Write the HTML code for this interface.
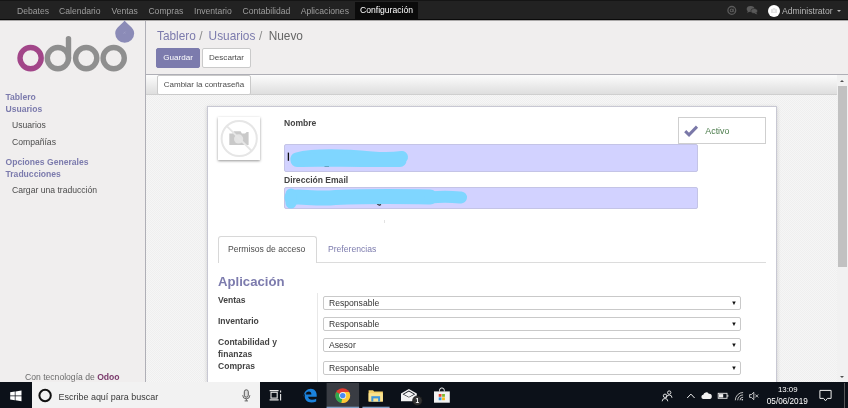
<!DOCTYPE html>
<html lang="es">
<head>
<meta charset="utf-8">
<title>Odoo - Usuarios</title>
<style>
html,body{margin:0;padding:0;}
body{width:848px;height:408px;overflow:hidden;position:relative;will-change:transform;background:#f0eeee;font-family:"Liberation Sans",Arial,sans-serif;font-size:8.1px;color:#4c4c4c;}
.abs{position:absolute;}
a{text-decoration:none;color:inherit;}
/* top nav */
#nav{left:0;top:0;width:848px;height:20px;background:linear-gradient(#151515 0,#151515 1px,#222222 1px,#222222 19px,#0a0a0a 19px,#0a0a0a 20px);}
#navl{left:0;top:20px;width:848px;height:1px;background:#a9a7a7;}
#nav span.mi{position:absolute;top:0.5px;height:21px;line-height:21px;color:#9d9d9d;font-size:8.6px;white-space:nowrap;}
#nav span.act{background:#0b0b0b;color:#ffffff;padding:0 5px;height:17px;line-height:17px;top:2px;}
/* sidebar */
#side{left:0;top:21px;width:145px;height:362px;background:#f0eeee;border-right:1px solid #afafb6;box-sizing:content-box;}
.sh{position:absolute;left:5.5px;color:#7c7bad;font-weight:bold;font-size:8.58px;white-space:nowrap;line-height:10px;}
.si{position:absolute;left:12px;color:#4c4c4c;font-size:8.6px;white-space:nowrap;line-height:10px;}
/* header */
#head{left:146px;top:21px;width:702px;height:53px;background:#f0eeee;border-bottom:1px solid #afafb6;}
.bc{position:absolute;left:157px;top:28.2px;font-size:11.85px;line-height:16px;white-space:nowrap;color:#4c4c4c;}
.bc a,.bc span{position:absolute;top:0;color:#7c7bad;}
.bc span.sl{color:#8a8a8a;}
.btn{position:absolute;box-sizing:border-box;border:1px solid #cacaca;border-radius:2px;background:#ffffff;color:#4c4c4c;font-size:8.1px;text-align:center;white-space:nowrap;}
.btn.hl{background:#7c7bad;border-color:#7c7bad;color:#fff;}
/* status bar */
#status{left:146px;top:75px;width:691px;height:19px;background:linear-gradient(#fcfcfc,#dedede);border-bottom:1px solid #cfcfcf;}
/* form bg */
#formbg{left:146px;top:95px;width:691px;height:288px;background-color:#f6f6f6;background-image:linear-gradient(45deg,#efefef 25%,transparent 25%,transparent 75%,#efefef 75%),linear-gradient(45deg,#efefef 25%,transparent 25%,transparent 75%,#efefef 75%);background-size:2px 2px;background-position:0 0,1px 1px;}
#sheet{left:207px;top:106px;width:568px;height:290px;background:#fff;border:1px solid #c8c8d3;box-shadow:0 1px 4px rgba(0,0,0,0.15);}
.lbl{position:absolute;font-weight:bold;color:#444;font-size:8.55px;line-height:11px;white-space:nowrap;}
.fld{position:absolute;left:284px;width:414px;background:#d2d2ff;border:1px solid #c4c4e6;border-radius:2px;box-sizing:border-box;}
.sel{position:absolute;left:323px;width:418px;height:14px;box-sizing:border-box;border:1px solid #c9c9c9;border-radius:2px;background:#fff;font-size:8.6px;line-height:12px;padding-left:5px;color:#333;}
.sel i{position:absolute;right:3px;top:0;font-style:normal;font-size:6px;color:#111;}
/* scrollbar */
#sb{left:837px;top:75px;width:11px;height:308px;background:#f1f1f1;}
#sbt{left:838px;top:86px;width:9px;height:181px;background:#c1c1c1;}
/* taskbar */
#task{left:0;top:382px;width:848px;height:26px;background:#0c1119;}
#search{left:32px;top:382px;width:228px;height:26px;background:#f2f2f2;}
</style>
</head>
<body>
<!-- NAV -->
<div id="nav" class="abs">
  <span class="mi" style="left:17px">Debates</span>
  <span class="mi" style="left:59px">Calendario</span>
  <span class="mi" style="left:111.500px">Ventas</span>
  <span class="mi" style="left:148.400px">Compras</span>
  <span class="mi" style="left:194px">Inventario</span>
  <span class="mi" style="left:242.600px">Contabilidad</span>
  <span class="mi" style="left:300.700px">Aplicaciones</span>
  <span class="mi act" style="left:355px">Configuración</span>
  <span class="mi" style="left:782px;color:#b5b5b5">Administrator</span>

  <svg class="abs" style="left:726px;top:5px" width="12" height="12" viewBox="0 0 12 12"><circle cx="5.8" cy="5.4" r="3.900" fill="none" stroke="#5a5a5a" stroke-width="1.3"/><circle cx="5.6" cy="5.4" r="1.4" fill="none" stroke="#5a5a5a" stroke-width="1.1"/><path d="M7.4 3.6v2.6c0 .9 1.2 1.2 2 .3" fill="none" stroke="#5a5a5a" stroke-width="0.8"/></svg>
  <svg class="abs" style="left:746px;top:5px" width="13" height="11" viewBox="0 0 13 11"><ellipse cx="4.6" cy="4" rx="3.9" ry="2.9" fill="#5a5a5a"/><path d="M2 5.5L1.2 8l2.6-1.4z" fill="#5a5a5a"/><ellipse cx="8.2" cy="6" rx="3.4" ry="2.5" fill="#5a5a5a" stroke="#222" stroke-width="0.6"/><path d="M10 7.6l1.4 1.8-2.8-.9z" fill="#5a5a5a"/></svg>
  <div class="abs" style="left:768px;top:5px;width:12px;height:12px;border-radius:50%;background:#fff"></div>
  <svg class="abs" style="left:771px;top:8px" width="6" height="5" viewBox="0 0 6 5"><path d="M0 1h1.5l.5-1h2l.5 1H6v4H0z" fill="#e3e3e3"/><circle cx="3" cy="2.9" r="1.2" fill="#f4f4f4"/></svg>
  <div class="abs" style="left:837px;top:10px;width:0;height:0;border-left:2.3px solid transparent;border-right:2.3px solid transparent;border-top:2.4px solid #b5b5b5"></div>
</div>

<div id="navl" class="abs"></div>
<!-- SIDEBAR -->
<div id="side" class="abs"></div>

<svg class="abs" style="left:0;top:19px" width="146" height="62" viewBox="0 19 146 62">
  <path d="M124.6 20.300 C126.5 24.2 134.2 27.5 134.2 33.2 A9.5 9.5 0 0 1 115.2 33.2 C115.2 27.5 122.7 24.2 124.6 20.300Z" fill="#8b8bb7"/>
  <path d="M123.4 33.800l2.200-2.200M123.700 31.900l.5.5M125 33.200l.5.500" stroke="#a9a9cc" stroke-width="0.500" fill="none"/>
  <circle cx="30.6" cy="58.1" r="10.6" fill="none" stroke="#a24689" stroke-width="5.4"/>
  <circle cx="57.9" cy="58.1" r="10.6" fill="none" stroke="#8f8f8f" stroke-width="5.4"/>
  <path d="M68.5 38.6V58.1" fill="none" stroke="#8f8f8f" stroke-width="5.4" stroke-linecap="round"/>
  <circle cx="86.2" cy="58.1" r="10.6" fill="none" stroke="#8f8f8f" stroke-width="5.4"/>
  <circle cx="113.7" cy="58.1" r="10.6" fill="none" stroke="#8f8f8f" stroke-width="5.4"/>
</svg>
<div class="sh" style="top:92.3px">Tablero</div>
<div class="sh" style="top:104.1px">Usuarios</div>
<div class="si" style="top:120px">Usuarios</div>
<div class="si" style="top:136.9px">Compañías</div>
<div class="sh" style="top:156.8px">Opciones Generales</div>
<div class="sh" style="top:169.2px">Traducciones</div>
<div class="si" style="top:185.2px">Cargar una traducción</div>
<div class="si" style="left:25px;top:371.700px;color:#6c6c6c">Con tecnología de <b style="color:#7b3a6c">Odoo</b></div>

<!-- HEADER -->
<div id="head" class="abs"></div>
<div class="bc"><a>Tablero</a><span class="sl" style="left:42.3px">/</span><a style="left:51.6px">Usuarios</a><span class="sl" style="left:102px">/</span><span style="left:111.700px;color:#666">Nuevo</span></div>
<div class="btn hl" style="left:156px;top:48px;width:44px;height:20px;line-height:18px">Guardar</div>
<div class="btn" style="left:202px;top:48px;width:49px;height:20px;line-height:18px">Descartar</div>

<div id="status" class="abs"></div>
<div class="btn" style="left:157px;top:75px;width:94px;height:20px;line-height:18px;font-size:8px">Cambiar la contraseña</div>

<div id="formbg" class="abs"></div>
<div id="sheet" class="abs"></div>

<div class="lbl" style="left:284px;top:118px">Nombre</div>
<div class="fld" style="top:144px;height:27.5px"></div>
<div class="lbl" style="left:284px;top:175.400px">Dirección Email</div>
<div class="fld" style="top:187px;height:22px"></div>


<div class="abs" style="left:218px;top:117px;width:42px;height:43px;background:#fff;box-shadow:0 0.5px 2.500px rgba(0,0,0,0.42)"></div>
<svg class="abs" style="left:218px;top:117px" width="43" height="44" viewBox="218 117 43 44">
  <circle cx="239.2" cy="138.5" r="17.6" fill="none" stroke="#e6e6e6" stroke-width="2"/>
  <path d="M229.3 133.5h3.2l1.3-2.3h6.8l1.3 2.3h3.2l1.6-1.6h1.9v13.2h-19.3z" fill="#c9c9c9"/>
  <circle cx="238.6" cy="138.9" r="4.6" fill="#e4e4e4"/>
  <path d="M226.8 126.1L251.6 150.9" stroke="#e6e6e6" stroke-width="2" fill="none"/>
</svg>

<div class="abs" style="left:678px;top:117px;width:88px;height:27px;box-sizing:border-box;border:1px solid #cfcfcf;background:#fff"></div>
<svg class="abs" style="left:683px;top:124px" width="17" height="14" viewBox="683 124 17 14"><path d="M685.2 131.2l3.8 3.6 8-8.2" fill="none" stroke="#7a78a8" stroke-width="3"/></svg>
<div class="abs" style="left:705.3px;top:125.7px;font-size:8.9px;line-height:11px;color:#4d7d4d;white-space:nowrap">Activo</div>

<svg class="abs" style="left:284px;top:144px" width="200" height="66" viewBox="284 144 200 66">
  <path d="M288.4 152.6v8.2" stroke="#111" stroke-width="1.3" fill="none"/>
  <path d="M324.5 166.4h4.5" stroke="#111" stroke-width="1.2" fill="none"/>
  <path d="M296.500 158.500C315 154 345 155 372 157.500C385 158.500 395 158 402 157" stroke="#7fd6ff" stroke-width="12" stroke-linecap="round" stroke-linejoin="round" fill="none"/>
  <path d="M297 160.500C320 159.500 350 161 400 160.500" stroke="#7fd6ff" stroke-width="13" stroke-linecap="round" fill="none"/>
  <path d="M377 203.5a3 3 0 0 0 4 1" stroke="#222" stroke-width="1.2" fill="none"/>
  <path d="M292 197.5C300 196 310 198.5 330 198C360 196 400 196.5 430 197" stroke="#7fd6ff" stroke-width="15" stroke-linecap="round" stroke-linejoin="round" fill="none"/>
  <path d="M291 194V203" stroke="#7fd6ff" stroke-width="11" stroke-linecap="round" fill="none"/>
  <path d="M430 197.5C445 196 455 197 461 197.5" stroke="#7fd6ff" stroke-width="12" stroke-linecap="round" fill="none"/>
</svg>

<div class="abs" style="left:218px;top:262px;width:548px;height:1px;background:#dcdcdc"></div>
<div class="abs" style="left:218px;top:236px;width:99px;height:27px;box-sizing:border-box;border:1px solid #d8d8d8;border-bottom:none;border-radius:3px 3px 0 0;background:#fff"></div>
<div class="abs" style="left:228px;top:244px;font-size:8.6px;line-height:11px;color:#4c4c4c;white-space:nowrap">Permisos de acceso</div>
<div class="abs" style="left:328px;top:244px;font-size:8.6px;line-height:11px;color:#7c7bad;white-space:nowrap">Preferencias</div>
<div class="abs" style="left:317px;top:293px;width:1px;height:90px;background:#e8e8e8"></div>
<div class="abs" style="left:384px;top:220px;width:1px;height:3px;background:#e2e2e2"></div>
<div class="lbl" style="left:218px;top:273.800px;font-size:13.15px;line-height:16px;color:#7c7bad">Aplicación</div>
<div class="lbl" style="left:218px;top:295px">Ventas</div>
<div class="sel" style="top:296px">Responsable<i>&#9660;</i></div>
<div class="lbl" style="left:218px;top:316px">Inventario</div>
<div class="sel" style="top:317px">Responsable<i>&#9660;</i></div>
<div class="lbl" style="left:218px;top:337px;line-height:11.5px">Contabilidad y<br>finanzas</div>
<div class="sel" style="top:338px">Asesor<i>&#9660;</i></div>
<div class="lbl" style="left:218px;top:360.800px">Compras</div>
<div class="sel" style="top:361px">Responsable<i>&#9660;</i></div>

<div id="sb" class="abs"></div>
<div id="sbt" class="abs"></div>
<div class="abs" style="left:840px;top:79.500px;width:0;height:0;border-left:2.500px solid transparent;border-right:2.500px solid transparent;border-bottom:2.600px solid #505050"></div>
<div class="abs" style="left:840px;top:375.500px;width:0;height:0;border-left:2.500px solid transparent;border-right:2.500px solid transparent;border-top:2.600px solid #505050"></div>

<!-- TASKBAR -->
<div id="task" class="abs"></div>
<div id="search" class="abs"></div>

<svg class="abs" style="left:0;top:383px" width="848" height="25" viewBox="0 383 848 25">
  <!-- start -->
  <path d="M10.2 392.2l4.6-.7v4h-4.6zM15.5 391.4l6-.9v5h-6zM10.2 396.2h4.6v4l-4.6-.7zM15.5 396.2h6v5l-6-.9z" fill="#fff"/>
  <!-- cortana -->
  <circle cx="45.1" cy="395.500" r="5.700" fill="none" stroke="#111" stroke-width="2"/>
  <!-- mic -->
  <rect x="244.3" y="389.8" width="4" height="7.4" rx="2" fill="#dcdcdc" stroke="#4a4a4a" stroke-width="0.9"/>
  <path d="M242.7 395.2a3.6 3.6 0 0 0 7.2 0M246.3 398.8v2M244.6 400.9h3.4" fill="none" stroke="#555" stroke-width="0.9"/>
  <!-- task view -->
  <rect x="271" y="392.3" width="6.2" height="5.8" fill="none" stroke="#e8e8e8" stroke-width="1.1"/>
  <path d="M269.6 390.6h9M269.6 399.9h9M280.6 390.4v2.2M280.6 394v6.4" stroke="#e8e8e8" stroke-width="1.1" fill="none"/>
  <!-- edge -->
  <path d="M303.6 396.6c.2-4.6 3.4-7.8 7.2-7.8 3.7 0 5.9 2.9 5.9 6.4v1.6h-8.6c.2 2 1.8 3 3.9 3 1.6 0 3-.4 4.2-1.100v2.700c-1.300.7-2.900 1-4.800 1-4.100 0-6.700-2.400-6.700-6.100 0-2.700 1.500-4.900 3.700-5.900-1.500 1-2.300 2.500-2.500 4h5.500c0-1.700-.9-2.900-2.600-2.900-2.400 0-4.600 2.200-5.200 5.200z" fill="#1b82dc"/>
  <!-- chrome bg -->
  <rect x="326.600" y="382" width="32.500" height="26" fill="#393c43"/>
  <rect x="326.600" y="406.700" width="32.500" height="1.300" fill="#7f9fc4"/>
  <circle cx="342.700" cy="395.600" r="7.400" fill="#e33b2e"/>
  <path d="M342.700 395.600L336.300 391.900A7.400 7.400 0 0 0 341.400 402.900L345.900 397.450z" fill="#2da94f"/>
  <path d="M342.700 395.600L341.400 402.900A7.400 7.400 0 0 0 349.100 391.900L342.700 391.900z" fill="#fcc934"/>
  <circle cx="342.700" cy="395.600" r="3.500" fill="#f1f1f1"/>
  <circle cx="342.700" cy="395.600" r="2.700" fill="#4a8af4"/>
  <!-- explorer -->
  <rect x="362.400" y="406.700" width="27.200" height="1.300" fill="#7f9fc4"/>
  <path d="M368.600 390.300h4.500l1 1.200h8.800v10h-14.300z" fill="#f6d26a"/>
  <path d="M368.600 393.200h14.300v8.300h-14.300z" fill="#fbe28f"/>
  <path d="M371.300 396.200h8.800v5.300h-8.800z" fill="#3f96dd"/>
  <path d="M373.300 398.400h4.800v3.100h-4.800z" fill="#fbe28f"/>
  <!-- mail -->
  <path d="M401 393.600l7.900-4.600 7.900 4.600v7.700h-15.800z" fill="#f4f4f4"/>
  <path d="M402.6 394.2l6.3-3.600 6.3 3.600-6.3 3.400z" fill="#0c1119"/>
  <path d="M403.900 394.300l5-2.800 5 2.800-5 2.600z" fill="#f4f4f4"/>
  <circle cx="417.400" cy="400.700" r="4.800" fill="#333" stroke="#151515" stroke-width="0.7"/>
  <text x="417.300" y="403.400" font-family="Liberation Sans, sans-serif" font-size="6.500" font-weight="bold" fill="#fff" text-anchor="middle">1</text>
  <!-- store -->
  <path d="M439.500 391.500v-1.200a2.400 2.400 0 0 1 4.800 0v1.200" fill="none" stroke="#f2f2f2" stroke-width="1"/>
  <path d="M434 391.400h15.800v11.300h-15.800z" fill="#f2f2f2"/>
  <rect x="438.700" y="394" width="2.800" height="2.800" fill="#e8412c"/>
  <rect x="442.100" y="394" width="2.800" height="2.800" fill="#7cb82f"/>
  <rect x="438.700" y="397.400" width="2.800" height="2.800" fill="#2f9be6"/>
  <rect x="442.100" y="397.400" width="2.800" height="2.800" fill="#f9b913"/>
  <!-- people -->
  <circle cx="669.200" cy="392.600" r="1.700" fill="none" stroke="#eee" stroke-width="0.900"/>
  <path d="M666.400 397.800a2.800 2.800 0 0 1 5.600 0" fill="none" stroke="#eee" stroke-width="0.900"/>
  <circle cx="665" cy="395.800" r="1.700" fill="none" stroke="#eee" stroke-width="0.900"/>
  <path d="M662.200 401.300a2.800 2.800 0 0 1 5.600 0" fill="none" stroke="#eee" stroke-width="0.900"/>
  <!-- chevron -->
  <path d="M687.200 398l3.700-3.900 3.700 3.900" fill="none" stroke="#eee" stroke-width="1"/>
  <!-- cloud -->
  <path d="M703 399a2.200 2.200 0 0 1 .3-4.300 3 3 0 0 1 5.500-.9 2.700 2.700 0 0 1 3 2.700 2.400 2.400 0 0 1-1.500 2.500z" fill="#f2f2f2"/>
  <!-- battery -->
  <rect x="718.200" y="393.300" width="8.800" height="5" fill="none" stroke="#eee" stroke-width="0.900"/>
  <rect x="719" y="394.100" width="4.200" height="3.400" fill="#eee"/>
  <rect x="727.400" y="394.800" width="0.900" height="2" fill="#eee"/>
  <!-- wifi -->
  <path d="M735.300 400.300a7.800 7.800 0 0 1 7.800-7.800M737.700 400.300a5.400 5.400 0 0 1 5.400-5.400M740 400.300a3.100 3.100 0 0 1 3.100-3.100" fill="none" stroke="#cfcfcf" stroke-width="0.900"/>
  <circle cx="742.300" cy="399.700" r="0.800" fill="#eee"/>
  <!-- volume -->
  <path d="M749.600 394.600h1.800l2.400-2.300v7.400l-2.400-2.300h-1.800z" fill="none" stroke="#eee" stroke-width="0.800"/>
  <path d="M755.300 394.500l2.900 2.900M758.200 394.500l-2.900 2.900" stroke="#eee" stroke-width="0.800"/>
  <!-- notif -->
  <path d="M819.900 390.400h11.200v8h-3.700l-1.900 2.400-1.900-2.400h-3.700z" fill="none" stroke="#eee" stroke-width="1"/>
  <rect x="844" y="383" width="0.800" height="25" fill="#6a6a6a"/>
</svg>
<div class="abs" style="left:58.500px;top:390.800px;font-size:8.97px;line-height:12px;color:#3a3a3a;white-space:nowrap">Escribe aquí para buscar</div>
<div class="abs" style="left:778px;top:385px;font-size:7.8px;line-height:10px;color:#fff;white-space:nowrap">13:09</div>
<div class="abs" style="left:766.800px;top:397.200px;font-size:8.2px;line-height:10px;color:#fff;white-space:nowrap">05/06/2019</div>
</body>
</html>
